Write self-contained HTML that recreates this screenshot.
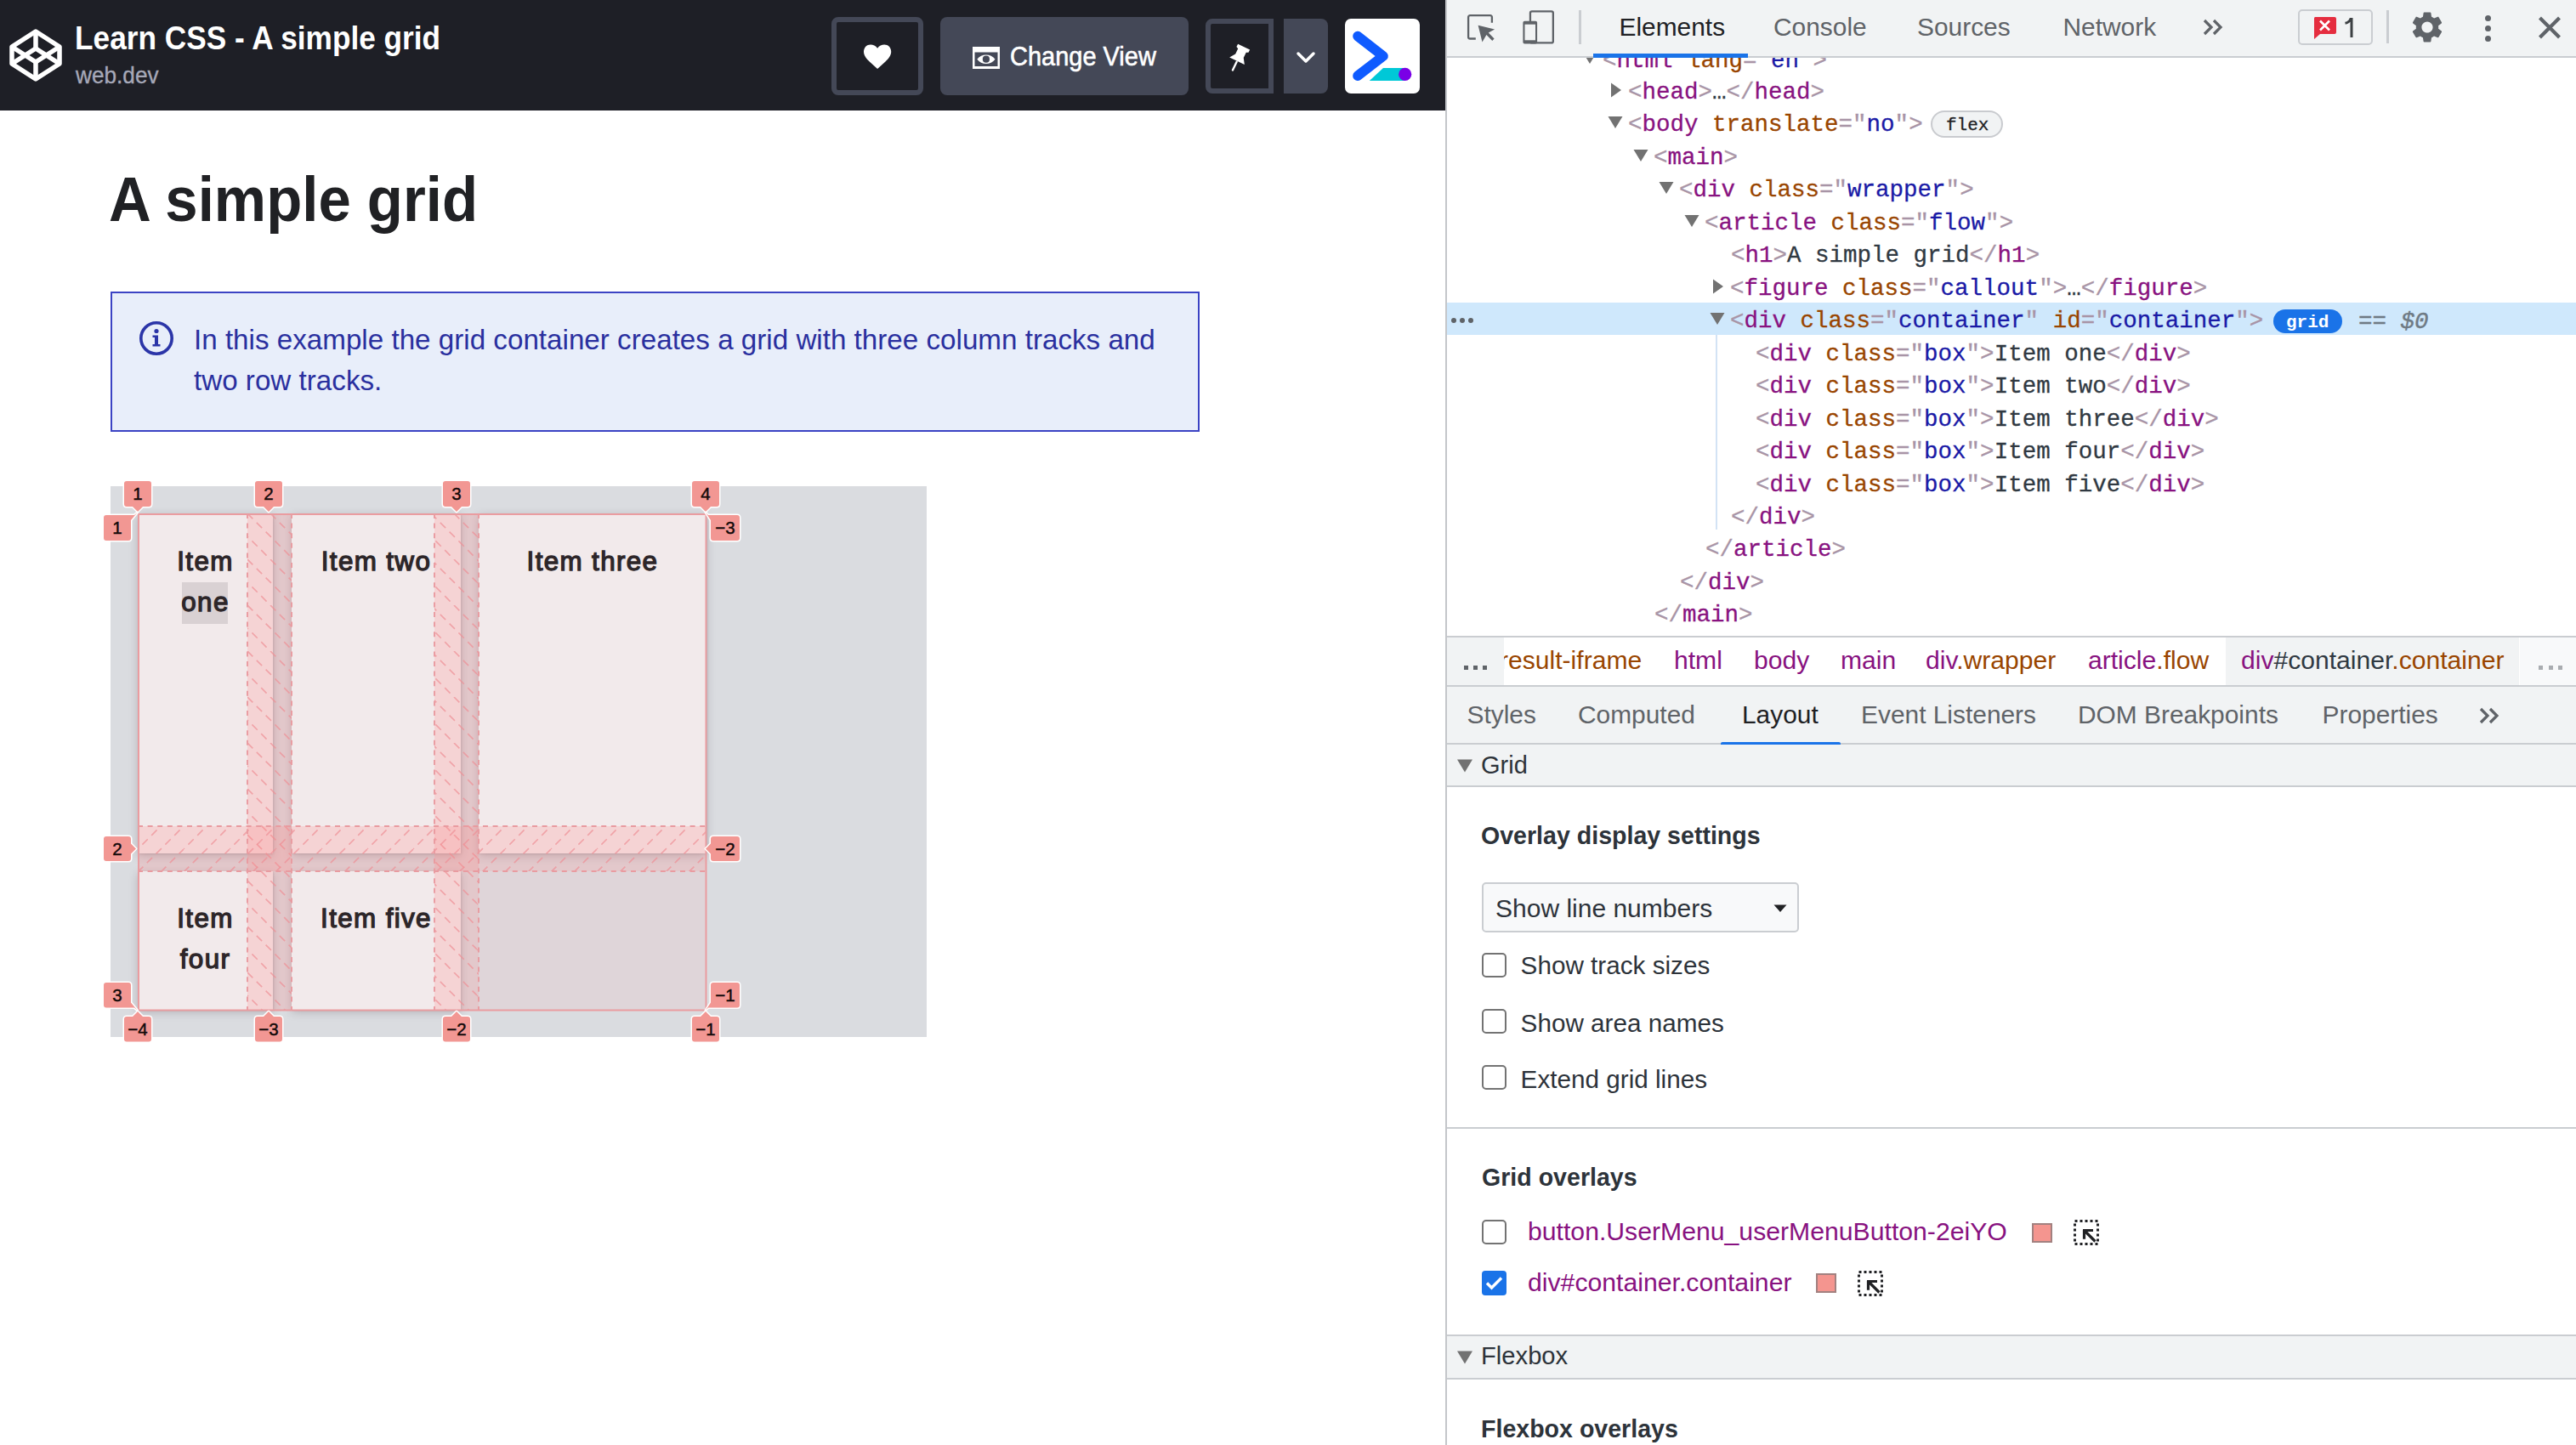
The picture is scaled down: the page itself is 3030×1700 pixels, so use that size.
<!DOCTYPE html>
<html><head><meta charset="utf-8">
<style>
*{box-sizing:border-box;margin:0;padding:0}
html,body{width:3030px;height:1700px;overflow:hidden;background:#fff;font-family:"Liberation Sans",sans-serif}
.a{position:absolute}
.t{position:absolute;white-space:nowrap}
.m{font-family:"Liberation Mono",monospace}
</style></head><body>
<!-- ============ CODEPEN HEADER ============ -->
<div class="a" style="left:0;top:0;width:1700px;height:130px;background:#1e1f26"></div>
<svg class="a" style="left:10px;top:33px" width="64" height="64" viewBox="0 0 64 64">
 <g fill="none" stroke="#fff" stroke-width="5.5" stroke-linejoin="round">
  <path d="M32 4 L60 22 L60 42 L32 60 L4 42 L4 22 Z"/>
  <path d="M4 22 L32 40 L60 22"/>
  <path d="M4 42 L32 24 L60 42"/>
  <path d="M32 4 L32 24 M32 40 L32 60"/>
 </g>
</svg>
<div class="t" style="left:87.7px;top:24.6px;font-size:39px;line-height:39px;font-weight:bold;color:#fff;transform:scaleX(0.9036);transform-origin:0 0">Learn CSS - A simple grid</div>
<div class="t" style="left:88.5px;top:76px;font-size:27px;line-height:27px;color:#a6a8b8;-webkit-text-stroke:0.35px #a6a8b8;transform:scaleX(0.97);transform-origin:0 0">web.dev</div>

<!-- heart btn -->
<div class="a" style="left:978px;top:20px;width:108px;height:92px;border:6px solid #444857;border-radius:8px;background:#1e1f26"></div>
<svg class="a" style="left:1015.9px;top:52px" width="33" height="30" viewBox="0 0 33 30"><path d="M16.1 4.8 C14 1.8 11 0.6 8 0.6 C3.5 0.6 0 4 0 8.8 C0 13.5 3 17 7 20.8 L16.1 29.1 L25.2 20.8 C29.2 17 32.2 13.5 32.2 8.8 C32.2 4 28.7 0.6 24.2 0.6 C21.2 0.6 18.2 1.8 16.1 4.8 Z" fill="#fff"/></svg>
<!-- change view -->
<div class="a" style="left:1106px;top:20px;width:292px;height:92px;border-radius:8px;background:#444857"></div>
<svg class="a" style="left:1144px;top:54.8px" width="32" height="26" viewBox="0 0 32 26">
 <path d="M0 0 H32 V26 H0 Z M2.5 6.4 V22.9 H29.5 V6.4 Z" fill="#fff" fill-rule="evenodd"/>
 <path d="M5.3 14.7 C10.3 7.6 21.5 7.6 26.5 14.7 C21.5 21.8 10.3 21.8 5.3 14.7 Z" fill="#fff"/>
 <circle cx="15.9" cy="14.7" r="4.1" fill="#444857"/>
</svg>
<div class="t" style="left:1188px;top:51.3px;font-size:31.5px;line-height:31.5px;font-weight:normal;color:#fff;-webkit-text-stroke:0.6px #fff;transform:scaleX(0.92);transform-origin:0 0">Change View</div>
<!-- pin btn -->
<div class="a" style="left:1418px;top:22px;width:80px;height:88px;border:6px solid #444857;border-radius:8px 0 0 8px;background:#1e1f26"></div>
<svg class="a" style="left:1430px;top:40px" width="60" height="55" viewBox="0 0 60 55">
 <g transform="translate(25.15 31.6) rotate(25.7)"><path d="M-7.8 -18.4 L7.8 -18.4 L7.8 -14.6 L5.3 -13.4 L5.3 -6.5 L9.8 0.3 L-9.8 0.3 L-5.3 -6.5 L-5.3 -13.4 L-7.8 -14.6 Z" fill="#fff"/><rect x="-1.2" y="0" width="2.4" height="13.2" rx="1.2" fill="#fff"/></g>
</svg>
<div class="a" style="left:1510px;top:22px;width:52px;height:88px;border-radius:0 8px 8px 0;background:#444857"></div>
<svg class="a" style="left:1524px;top:59px" width="24" height="17" viewBox="0 0 24 17"><path d="M3 4 L12 13 L21 4" fill="none" stroke="#fff" stroke-width="3.5" stroke-linecap="round" stroke-linejoin="round"/></svg>
<!-- white logo -->
<div class="a" style="left:1582px;top:22px;width:88px;height:88px;border-radius:7px;background:#fff"></div>
<svg class="a" style="left:1582px;top:22px" width="88" height="88" viewBox="0 0 88 88">
 <path d="M14 65 L28 65 L33 58 L70 58 L70 72 L23 72 Z" fill="none"/>
 <path d="M28.8 73 L45 57.9 L70.7 57.9 L70.7 73 Z" fill="#00c8d7"/>
 <circle cx="70.7" cy="65.4" r="7.6" fill="#7a00e6"/>
 <path d="M15 20.6 L45 44 L15 67.2" fill="none" stroke="#0f5bff" stroke-width="11.6" stroke-linecap="round" stroke-linejoin="round"/>
</svg>

<!-- ============ PAGE ============ -->
<div class="t" style="left:128px;top:196.5px;font-size:75px;line-height:75px;font-weight:bold;color:#202124;transform:scaleX(0.919);transform-origin:0 0">A simple grid</div>

<div class="a" style="left:130px;top:343px;width:1281px;height:165px;border:2px solid #3b43c4;background:#e8eefa"></div>
<svg class="a" style="left:162px;top:376px" width="44" height="44" viewBox="0 0 44 44">
 <circle cx="22" cy="22" r="18.2" fill="none" stroke="#2b35a8" stroke-width="3.6"/>
 <circle cx="22" cy="13.5" r="2.6" fill="#2b35a8"/>
 <path d="M17.5 18.5 L24 18.5 L24 29 L26.5 29 L26.5 31.5 L17.5 31.5 L17.5 29 L20 29 L20 21 L17.5 21 Z" fill="#2b35a8"/>
</svg>
<div class="t" style="left:228px;top:375.7px;font-size:33.2px;line-height:48.5px;color:#2a309f">In this example the grid container creates a grid with three column tracks and<br>two row tracks.</div>

<!-- GRID AREA placeholder -->
<!-- GRID -->
<div class="a" style="left:130px;top:572px;width:960px;height:648px;background:#dadce0"></div>
<div class="a" style="left:162px;top:604px;width:159px;height:400px;background:#f2eaeb;box-shadow:0 3px 10px rgba(60,40,50,.22),1px 1px 2px rgba(60,40,50,.12)"></div>
<div class="a" style="left:343px;top:604px;width:199px;height:400px;background:#f2eaeb;box-shadow:0 3px 10px rgba(60,40,50,.22),1px 1px 2px rgba(60,40,50,.12)"></div>
<div class="a" style="left:563px;top:604px;width:268px;height:400px;background:#f2eaeb;box-shadow:0 3px 10px rgba(60,40,50,.22),1px 1px 2px rgba(60,40,50,.12)"></div>
<div class="a" style="left:162px;top:1025px;width:159px;height:163px;background:#f2eaeb;box-shadow:0 3px 10px rgba(60,40,50,.22),1px 1px 2px rgba(60,40,50,.12)"></div>
<div class="a" style="left:343px;top:1025px;width:199px;height:163px;background:#f2eaeb;box-shadow:0 3px 10px rgba(60,40,50,.22),1px 1px 2px rgba(60,40,50,.12)"></div>
<div class="a" style="left:563px;top:1025px;width:268px;height:163px;background:#dfd5d9"></div>
<div class="a" style="left:214px;top:685px;width:54px;height:49px;background:#d9d1d3"></div>
<div class="t" style="left:41.5px;width:400px;text-align:center;top:636.7px;font-size:31.4px;line-height:48.3px;font-weight:normal;letter-spacing:1.35px;-webkit-text-stroke:1.3px #2d2629;color:#2d2629">Item<br>one</div>
<div class="t" style="left:242.5px;width:400px;text-align:center;top:636.7px;font-size:31.4px;line-height:48.3px;font-weight:normal;letter-spacing:1.35px;-webkit-text-stroke:1.3px #2d2629;color:#2d2629">Item two</div>
<div class="t" style="left:497px;width:400px;text-align:center;top:636.7px;font-size:31.4px;line-height:48.3px;font-weight:normal;letter-spacing:1.35px;-webkit-text-stroke:1.3px #2d2629;color:#2d2629">Item three</div>
<div class="t" style="left:41.5px;width:400px;text-align:center;top:1057.0px;font-size:31.4px;line-height:48.3px;font-weight:normal;letter-spacing:1.35px;-webkit-text-stroke:1.3px #2d2629;color:#2d2629">Item<br>four</div>
<div class="t" style="left:242.5px;width:400px;text-align:center;top:1057.0px;font-size:31.4px;line-height:48.3px;font-weight:normal;letter-spacing:1.35px;-webkit-text-stroke:1.3px #2d2629;color:#2d2629">Item five</div>
<svg class="a" style="left:0;top:0" width="1100" height="1240" viewBox="0 0 1100 1240">
<defs>
<pattern id="hv" patternUnits="userSpaceOnUse" width="54" height="54" x="291" y="604"><g stroke="#ee8f95" stroke-width="1.7" stroke-dasharray="9 6.274" opacity=".7" fill="none"><path d="M0 0 L54 54"/><path d="M27 0 L54 27"/><path d="M0 27 L27 54" stroke-dashoffset="7.637"/></g></pattern>
<pattern id="hh" patternUnits="userSpaceOnUse" width="54" height="54" x="162" y="972"><g stroke="#ee8f95" stroke-width="1.7" stroke-dasharray="9 6.274" opacity=".7" fill="none"><path d="M0 54 L54 0"/><path d="M27 54 L54 27"/><path d="M0 27 L27 0" stroke-dashoffset="7.637"/></g></pattern>
</defs>
<rect x="291" y="604" width="52" height="585" fill="rgba(255,140,140,.24)"/>
<rect x="291" y="604" width="52" height="585" fill="url(#hv)"/>
<rect x="511" y="604" width="52" height="585" fill="rgba(255,140,140,.24)"/>
<rect x="511" y="604" width="52" height="585" fill="url(#hv)"/>
<rect x="162" y="972" width="669" height="53" fill="rgba(255,140,140,.24)"/>
<rect x="162" y="972" width="669" height="53" fill="url(#hh)"/>
<line x1="291" y1="604" x2="291" y2="1189" stroke="#e99ba0" stroke-width="1.9" stroke-dasharray="6 5.6"/>
<line x1="343" y1="604" x2="343" y2="1189" stroke="#e99ba0" stroke-width="1.9" stroke-dasharray="6 5.6"/>
<line x1="511" y1="604" x2="511" y2="1189" stroke="#e99ba0" stroke-width="1.9" stroke-dasharray="6 5.6"/>
<line x1="563" y1="604" x2="563" y2="1189" stroke="#e99ba0" stroke-width="1.9" stroke-dasharray="6 5.6"/>
<line x1="162" y1="972" x2="831" y2="972" stroke="#e99ba0" stroke-width="1.9" stroke-dasharray="6 5.6"/>
<line x1="162" y1="1025" x2="831" y2="1025" stroke="#e99ba0" stroke-width="1.9" stroke-dasharray="6 5.6"/>
<rect x="163" y="605" width="667.5" height="183.8" fill="none"/>
<path d="M163 605 H830.5 V1188.5 H163 Z" fill="none" stroke="#ea9ca0" stroke-width="2"/>
<path d="M149.0 566 H175.0 Q178.0 566 178.0 569 V593 Q178.0 596 175.0 596 H168 L162 602 L156 596 H149.0 Q146.0 596 146.0 593 V569 Q146.0 566 149.0 566 Z" fill="#f29793" stroke="#fff" stroke-width="3" paint-order="stroke" stroke-linejoin="round"/>
<path d="M303.0 566 H329.0 Q332.0 566 332.0 569 V593 Q332.0 596 329.0 596 H322 L316 602 L310 596 H303.0 Q300.0 596 300.0 593 V569 Q300.0 566 303.0 566 Z" fill="#f29793" stroke="#fff" stroke-width="3" paint-order="stroke" stroke-linejoin="round"/>
<path d="M524.0 566 H550.0 Q553.0 566 553.0 569 V593 Q553.0 596 550.0 596 H543 L537 602 L531 596 H524.0 Q521.0 596 521.0 593 V569 Q521.0 566 524.0 566 Z" fill="#f29793" stroke="#fff" stroke-width="3" paint-order="stroke" stroke-linejoin="round"/>
<path d="M817.0 566 H843.0 Q846.0 566 846.0 569 V593 Q846.0 596 843.0 596 H836 L830 602 L824 596 H817.0 Q814.0 596 814.0 593 V569 Q814.0 566 817.0 566 Z" fill="#f29793" stroke="#fff" stroke-width="3" paint-order="stroke" stroke-linejoin="round"/>
<path d="M149.0 1196 H156 L162 1190 L168 1196 H175.0 Q178.0 1196 178.0 1199 V1222.5 Q178.0 1225.5 175.0 1225.5 H149.0 Q146.0 1225.5 146.0 1222.5 V1199 Q146.0 1196 149.0 1196 Z" fill="#f29793" stroke="#fff" stroke-width="3" paint-order="stroke" stroke-linejoin="round"/>
<path d="M303.0 1196 H310 L316 1190 L322 1196 H329.0 Q332.0 1196 332.0 1199 V1222.5 Q332.0 1225.5 329.0 1225.5 H303.0 Q300.0 1225.5 300.0 1222.5 V1199 Q300.0 1196 303.0 1196 Z" fill="#f29793" stroke="#fff" stroke-width="3" paint-order="stroke" stroke-linejoin="round"/>
<path d="M524.0 1196 H531 L537 1190 L543 1196 H550.0 Q553.0 1196 553.0 1199 V1222.5 Q553.0 1225.5 550.0 1225.5 H524.0 Q521.0 1225.5 521.0 1222.5 V1199 Q521.0 1196 524.0 1196 Z" fill="#f29793" stroke="#fff" stroke-width="3" paint-order="stroke" stroke-linejoin="round"/>
<path d="M817.0 1196 H824 L830 1190 L836 1196 H843.0 Q846.0 1196 846.0 1199 V1222.5 Q846.0 1225.5 843.0 1225.5 H817.0 Q814.0 1225.5 814.0 1222.5 V1199 Q814.0 1196 817.0 1196 Z" fill="#f29793" stroke="#fff" stroke-width="3" paint-order="stroke" stroke-linejoin="round"/>
<path d="M125 606 H158 L161.5 603 L154 612 V633 Q154 636 151 636 H125 Q122 636 122 633 V609 Q122 606 125 606 Z" fill="#f29793" stroke="#fff" stroke-width="3" paint-order="stroke" stroke-linejoin="round"/>
<path d="M125 984.0 H151 Q154 984.0 154 987.0 V992.5 L160 998.5 L154 1004.5 V1010.0 Q154 1013.0 151 1013.0 H125 Q122 1013.0 122 1010.0 V987.0 Q122 984.0 125 984.0 Z" fill="#f29793" stroke="#fff" stroke-width="3" paint-order="stroke" stroke-linejoin="round"/>
<path d="M125 1156 H151 Q154 1156 154 1159 V1179.5 L161.5 1188.5 L158 1185.5 H125 Q122 1185.5 122 1182.5 V1159 Q122 1156 125 1156 Z" fill="#f29793" stroke="#fff" stroke-width="3" paint-order="stroke" stroke-linejoin="round"/>
<path d="M836 612 L830 603 L833 606 H867 Q870 606 870 609 V633 Q870 636 867 636 H839 Q836 636 836 633 Z" fill="#f29793" stroke="#fff" stroke-width="3" paint-order="stroke" stroke-linejoin="round"/>
<path d="M839 984.0 H867 Q870 984.0 870 987.0 V1010.0 Q870 1013.0 867 1013.0 H839 Q836 1013.0 836 1010.0 V1004.5 L830 998.5 L836 992.5 V987.0 Q836 984.0 839 984.0 Z" fill="#f29793" stroke="#fff" stroke-width="3" paint-order="stroke" stroke-linejoin="round"/>
<path d="M839 1156 H867 Q870 1156 870 1159 V1182.5 Q870 1185.5 867 1185.5 H833 L830 1188.5 L836 1179.5 V1159 Q836 1156 839 1156 Z" fill="#f29793" stroke="#fff" stroke-width="3" paint-order="stroke" stroke-linejoin="round"/>
<text x="162" y="588.2" text-anchor="middle" font-family="Liberation Sans" font-size="20.5" fill="#140a0a" stroke="#140a0a" stroke-width="0.45">1</text>
<text x="316" y="588.2" text-anchor="middle" font-family="Liberation Sans" font-size="20.5" fill="#140a0a" stroke="#140a0a" stroke-width="0.45">2</text>
<text x="537" y="588.2" text-anchor="middle" font-family="Liberation Sans" font-size="20.5" fill="#140a0a" stroke="#140a0a" stroke-width="0.45">3</text>
<text x="830" y="588.2" text-anchor="middle" font-family="Liberation Sans" font-size="20.5" fill="#140a0a" stroke="#140a0a" stroke-width="0.45">4</text>
<text x="162" y="1218.2" text-anchor="middle" font-family="Liberation Sans" font-size="20.5" fill="#140a0a" stroke="#140a0a" stroke-width="0.45">−4</text>
<text x="316" y="1218.2" text-anchor="middle" font-family="Liberation Sans" font-size="20.5" fill="#140a0a" stroke="#140a0a" stroke-width="0.45">−3</text>
<text x="537" y="1218.2" text-anchor="middle" font-family="Liberation Sans" font-size="20.5" fill="#140a0a" stroke="#140a0a" stroke-width="0.45">−2</text>
<text x="830" y="1218.2" text-anchor="middle" font-family="Liberation Sans" font-size="20.5" fill="#140a0a" stroke="#140a0a" stroke-width="0.45">−1</text>
<text x="138" y="628.2" text-anchor="middle" font-family="Liberation Sans" font-size="20.5" fill="#140a0a" stroke="#140a0a" stroke-width="0.45">1</text>
<text x="138" y="1005.7" text-anchor="middle" font-family="Liberation Sans" font-size="20.5" fill="#140a0a" stroke="#140a0a" stroke-width="0.45">2</text>
<text x="138" y="1178.2" text-anchor="middle" font-family="Liberation Sans" font-size="20.5" fill="#140a0a" stroke="#140a0a" stroke-width="0.45">3</text>
<text x="853" y="628.2" text-anchor="middle" font-family="Liberation Sans" font-size="20.5" fill="#140a0a" stroke="#140a0a" stroke-width="0.45">−3</text>
<text x="853" y="1005.7" text-anchor="middle" font-family="Liberation Sans" font-size="20.5" fill="#140a0a" stroke="#140a0a" stroke-width="0.45">−2</text>
<text x="853" y="1178.2" text-anchor="middle" font-family="Liberation Sans" font-size="20.5" fill="#140a0a" stroke="#140a0a" stroke-width="0.45">−1</text>
</svg>

<!-- ============ DEVTOOLS ============ -->
<!-- DEVTOOLS -->
<div class="a" style="left:1700px;top:0;width:1330px;height:1700px;background:#fff"></div>
<div class="a" style="left:1700px;top:0;width:2px;height:1700px;background:#c4c6ca"></div>
<div class="a" style="left:1702px;top:356px;width:1328px;height:38px;background:#cfe8fc"></div>
<div class="a" style="left:1707px;top:374px;width:6px;height:6px;border-radius:50%;background:#5f6368"></div>
<div class="a" style="left:1717px;top:374px;width:6px;height:6px;border-radius:50%;background:#5f6368"></div>
<div class="a" style="left:1727px;top:374px;width:6px;height:6px;border-radius:50%;background:#5f6368"></div>
<div class="a" style="left:2018px;top:394px;width:2px;height:229px;background:#d3e3f5"></div>
<div class="t m" style="left:1885px;top:55.5px;font-size:27.5px;line-height:31.2px;color:#303942;-webkit-text-stroke:0.3px currentColor"><span style="color:#a894a6">&lt;</span><span style="color:#881280">html</span> <span style="color:#994500">lang</span><span style="color:#a894a6">=&quot;</span><span style="color:#1a1aa6">en</span><span style="color:#a894a6">&quot;</span><span style="color:#a894a6">&gt;</span></div>
<svg class="a" style="left:1861px;top:60.425px" width="18" height="16" viewBox="0 0 18 16"><path d="M0.5 1 L17.5 1 L9 15 Z" fill="#727272"/></svg>
<div class="t m" style="left:1915px;top:92.8px;font-size:27.5px;line-height:31.2px;color:#303942;-webkit-text-stroke:0.3px currentColor"><span style="color:#a894a6">&lt;</span><span style="color:#881280">head</span><span style="color:#a894a6">&gt;</span><span style="color:#303942">…</span><span style="color:#a894a6">&lt;/</span><span style="color:#881280">head</span><span style="color:#a894a6">&gt;</span></div>
<svg class="a" style="left:1894px;top:96.7px" width="14" height="18" viewBox="0 0 14 18"><path d="M1 0.5 L13 9 L1 17.5 Z" fill="#727272"/></svg>
<div class="t m" style="left:1915px;top:131.3px;font-size:27.5px;line-height:31.2px;color:#303942;-webkit-text-stroke:0.3px currentColor"><span style="color:#a894a6">&lt;</span><span style="color:#881280">body</span> <span style="color:#994500">translate</span><span style="color:#a894a6">=&quot;</span><span style="color:#1a1aa6">no</span><span style="color:#a894a6">&quot;</span><span style="color:#a894a6">&gt;</span></div>
<svg class="a" style="left:1891px;top:136.175px" width="18" height="16" viewBox="0 0 18 16"><path d="M0.5 1 L17.5 1 L9 15 Z" fill="#727272"/></svg>
<div class="t m" style="left:1945px;top:169.7px;font-size:27.5px;line-height:31.2px;color:#303942;-webkit-text-stroke:0.3px currentColor"><span style="color:#a894a6">&lt;</span><span style="color:#881280">main</span><span style="color:#a894a6">&gt;</span></div>
<svg class="a" style="left:1921px;top:174.65px" width="18" height="16" viewBox="0 0 18 16"><path d="M0.5 1 L17.5 1 L9 15 Z" fill="#727272"/></svg>
<div class="t m" style="left:1975px;top:208.2px;font-size:27.5px;line-height:31.2px;color:#303942;-webkit-text-stroke:0.3px currentColor"><span style="color:#a894a6">&lt;</span><span style="color:#881280">div</span> <span style="color:#994500">class</span><span style="color:#a894a6">=&quot;</span><span style="color:#1a1aa6">wrapper</span><span style="color:#a894a6">&quot;</span><span style="color:#a894a6">&gt;</span></div>
<svg class="a" style="left:1951px;top:213.125px" width="18" height="16" viewBox="0 0 18 16"><path d="M0.5 1 L17.5 1 L9 15 Z" fill="#727272"/></svg>
<div class="t m" style="left:2005px;top:246.7px;font-size:27.5px;line-height:31.2px;color:#303942;-webkit-text-stroke:0.3px currentColor"><span style="color:#a894a6">&lt;</span><span style="color:#881280">article</span> <span style="color:#994500">class</span><span style="color:#a894a6">=&quot;</span><span style="color:#1a1aa6">flow</span><span style="color:#a894a6">&quot;</span><span style="color:#a894a6">&gt;</span></div>
<svg class="a" style="left:1981px;top:251.60000000000002px" width="18" height="16" viewBox="0 0 18 16"><path d="M0.5 1 L17.5 1 L9 15 Z" fill="#727272"/></svg>
<div class="t m" style="left:2036px;top:285.2px;font-size:27.5px;line-height:31.2px;color:#303942;-webkit-text-stroke:0.3px currentColor"><span style="color:#a894a6">&lt;</span><span style="color:#881280">h1</span><span style="color:#a894a6">&gt;</span>A simple grid<span style="color:#a894a6">&lt;/</span><span style="color:#881280">h1</span><span style="color:#a894a6">&gt;</span></div>
<div class="t m" style="left:2035px;top:323.6px;font-size:27.5px;line-height:31.2px;color:#303942;-webkit-text-stroke:0.3px currentColor"><span style="color:#a894a6">&lt;</span><span style="color:#881280">figure</span> <span style="color:#994500">class</span><span style="color:#a894a6">=&quot;</span><span style="color:#1a1aa6">callout</span><span style="color:#a894a6">&quot;</span><span style="color:#a894a6">&gt;</span>…<span style="color:#a894a6">&lt;/</span><span style="color:#881280">figure</span><span style="color:#a894a6">&gt;</span></div>
<svg class="a" style="left:2014px;top:327.55px" width="14" height="18" viewBox="0 0 14 18"><path d="M1 0.5 L13 9 L1 17.5 Z" fill="#727272"/></svg>
<div class="t m" style="left:2035px;top:362.1px;font-size:27.5px;line-height:31.2px;color:#303942;-webkit-text-stroke:0.3px currentColor"><span style="color:#a894a6">&lt;</span><span style="color:#881280">div</span> <span style="color:#994500">class</span><span style="color:#a894a6">=&quot;</span><span style="color:#1a1aa6">container</span><span style="color:#a894a6">&quot;</span> <span style="color:#994500">id</span><span style="color:#a894a6">=&quot;</span><span style="color:#1a1aa6">container</span><span style="color:#a894a6">&quot;</span><span style="color:#a894a6">&gt;</span></div>
<svg class="a" style="left:2011px;top:367.025px" width="18" height="16" viewBox="0 0 18 16"><path d="M0.5 1 L17.5 1 L9 15 Z" fill="#727272"/></svg>
<div class="t m" style="left:2065px;top:400.6px;font-size:27.5px;line-height:31.2px;color:#303942;-webkit-text-stroke:0.3px currentColor"><span style="color:#a894a6">&lt;</span><span style="color:#881280">div</span> <span style="color:#994500">class</span><span style="color:#a894a6">=&quot;</span><span style="color:#1a1aa6">box</span><span style="color:#a894a6">&quot;</span><span style="color:#a894a6">&gt;</span>Item one<span style="color:#a894a6">&lt;/</span><span style="color:#881280">div</span><span style="color:#a894a6">&gt;</span></div>
<div class="t m" style="left:2065px;top:439.1px;font-size:27.5px;line-height:31.2px;color:#303942;-webkit-text-stroke:0.3px currentColor"><span style="color:#a894a6">&lt;</span><span style="color:#881280">div</span> <span style="color:#994500">class</span><span style="color:#a894a6">=&quot;</span><span style="color:#1a1aa6">box</span><span style="color:#a894a6">&quot;</span><span style="color:#a894a6">&gt;</span>Item two<span style="color:#a894a6">&lt;/</span><span style="color:#881280">div</span><span style="color:#a894a6">&gt;</span></div>
<div class="t m" style="left:2065px;top:477.5px;font-size:27.5px;line-height:31.2px;color:#303942;-webkit-text-stroke:0.3px currentColor"><span style="color:#a894a6">&lt;</span><span style="color:#881280">div</span> <span style="color:#994500">class</span><span style="color:#a894a6">=&quot;</span><span style="color:#1a1aa6">box</span><span style="color:#a894a6">&quot;</span><span style="color:#a894a6">&gt;</span>Item three<span style="color:#a894a6">&lt;/</span><span style="color:#881280">div</span><span style="color:#a894a6">&gt;</span></div>
<div class="t m" style="left:2065px;top:516.0px;font-size:27.5px;line-height:31.2px;color:#303942;-webkit-text-stroke:0.3px currentColor"><span style="color:#a894a6">&lt;</span><span style="color:#881280">div</span> <span style="color:#994500">class</span><span style="color:#a894a6">=&quot;</span><span style="color:#1a1aa6">box</span><span style="color:#a894a6">&quot;</span><span style="color:#a894a6">&gt;</span>Item four<span style="color:#a894a6">&lt;/</span><span style="color:#881280">div</span><span style="color:#a894a6">&gt;</span></div>
<div class="t m" style="left:2065px;top:554.5px;font-size:27.5px;line-height:31.2px;color:#303942;-webkit-text-stroke:0.3px currentColor"><span style="color:#a894a6">&lt;</span><span style="color:#881280">div</span> <span style="color:#994500">class</span><span style="color:#a894a6">=&quot;</span><span style="color:#1a1aa6">box</span><span style="color:#a894a6">&quot;</span><span style="color:#a894a6">&gt;</span>Item five<span style="color:#a894a6">&lt;/</span><span style="color:#881280">div</span><span style="color:#a894a6">&gt;</span></div>
<div class="t m" style="left:2036px;top:593.0px;font-size:27.5px;line-height:31.2px;color:#303942;-webkit-text-stroke:0.3px currentColor"><span style="color:#a894a6">&lt;/</span><span style="color:#881280">div</span><span style="color:#a894a6">&gt;</span></div>
<div class="t m" style="left:2006px;top:631.4px;font-size:27.5px;line-height:31.2px;color:#303942;-webkit-text-stroke:0.3px currentColor"><span style="color:#a894a6">&lt;/</span><span style="color:#881280">article</span><span style="color:#a894a6">&gt;</span></div>
<div class="t m" style="left:1976px;top:669.9px;font-size:27.5px;line-height:31.2px;color:#303942;-webkit-text-stroke:0.3px currentColor"><span style="color:#a894a6">&lt;/</span><span style="color:#881280">div</span><span style="color:#a894a6">&gt;</span></div>
<div class="t m" style="left:1946px;top:708.4px;font-size:27.5px;line-height:31.2px;color:#303942;-webkit-text-stroke:0.3px currentColor"><span style="color:#a894a6">&lt;/</span><span style="color:#881280">main</span><span style="color:#a894a6">&gt;</span></div>
<div class="a" style="left:2270.5px;top:130px;width:85px;height:31.5px;border-radius:16px;border:2px solid #c9cbcf;background:#f1f3f4"></div>
<div class="t m" style="left:2289px;top:135.1px;font-size:21px;line-height:26px;color:#202124;-webkit-text-stroke:0.3px #202124">flex</div>
<div class="a" style="left:2674px;top:364px;width:81px;height:28px;border-radius:14px;background:#1a73e8"></div>
<div class="t m" style="left:2689px;top:366.5px;font-size:21px;line-height:26px;color:#fff;font-weight:bold">grid</div>
<div class="t m" style="left:2774px;top:363.1px;font-size:27.5px;line-height:31.2px;color:#6f7a84;font-style:italic;-webkit-text-stroke:0.4px #6f7a84">== $0</div>
<div class="a" style="left:1702px;top:0;width:1328px;height:66px;background:#f1f3f4"></div>
<div class="a" style="left:1702px;top:66px;width:1328px;height:2px;background:#cacdd1"></div>
<div class="a" style="left:1874px;top:63px;width:182px;height:5px;background:#1a73e8"></div>
<div class="t" style="left:1904.5px;top:15.1px;font-size:29.9px;line-height:33.4px;color:#202124;font-weight:normal;">Elements</div>
<div class="t" style="left:2086px;top:15.1px;font-size:29.9px;line-height:33.4px;color:#5f6368;font-weight:normal;">Console</div>
<div class="t" style="left:2255px;top:15.1px;font-size:29.9px;line-height:33.4px;color:#5f6368;font-weight:normal;">Sources</div>
<div class="t" style="left:2426.5px;top:15.1px;font-size:29.9px;line-height:33.4px;color:#5f6368;font-weight:normal;">Network</div>
<svg class="a" style="left:2590px;top:21px" width="28" height="22" viewBox="0 0 28 22"><path d="M3 3 L11 11 L3 19 M14 3 L22 11 L14 19" fill="none" stroke="#5f6368" stroke-width="3.2"/></svg>
<svg class="a" style="left:1722px;top:14px" width="40" height="38" viewBox="0 0 40 38"><path d="M13.8 31.5 H7.1 a2 2 0 0 1 -2 -2 V6.2 a2 2 0 0 1 2 -2 H30.9 a2 2 0 0 1 2 2 V12.7" fill="none" stroke="#5f6368" stroke-width="2.3"/><path d="M16.6 15.8 L36.1 20.5 L28.8 24.6 L35.6 31.6 L33.3 34 L26.4 27 L21.5 35.4 Z" fill="#5f6368"/></svg>
<svg class="a" style="left:1788px;top:10px" width="44" height="44" viewBox="0 0 44 44"><rect x="11.95" y="3.45" width="26.9" height="37" rx="2" fill="none" stroke="#5f6368" stroke-width="2.3"/><rect x="3.4" y="14.8" width="16.7" height="26.8" rx="2" fill="#5f6368"/><rect x="5.5" y="18.7" width="12.5" height="18.6" fill="#f1f3f4"/></svg>
<div class="a" style="left:1856.5px;top:12px;width:3px;height:39.5px;background:#cacdd1"></div>
<div class="a" style="left:2703px;top:11px;width:88px;height:42px;border:2px solid #cacdd1;border-radius:5px;background:#f1f3f4"></div>
<svg class="a" style="left:2720px;top:18px" width="30" height="30" viewBox="0 0 30 30"><path d="M3 2 H26 a2 2 0 0 1 2 2 V20 a2 2 0 0 1 -2 2 H9 L2 28 V4 a2 2 0 0 1 1 -2 Z" fill="#e52d3f"/><path d="M9 6.5 L20 17.5 M20 6.5 L9 17.5" stroke="#fff" stroke-width="2.6"/></svg>
<svg class="a" style="left:2755px;top:20px" width="18" height="26" viewBox="0 0 18 26"><path d="M11 24 V2.5 H9.8 C8.8 5 6.5 6.8 3.5 7.3" fill="none" stroke="#3c4043" stroke-width="3"/></svg>
<div class="a" style="left:2806.5px;top:12px;width:3px;height:39px;background:#cacdd1"></div>
<svg class="a" style="left:2833px;top:9.7px" width="44" height="44" viewBox="0 0 24 24"><path fill="#5f6368" d="M19.14 12.94c.04-.3.06-.61.06-.94 0-.32-.02-.64-.07-.94l2.03-1.58c.18-.14.23-.41.12-.61l-1.92-3.32c-.12-.22-.37-.29-.59-.22l-2.39.96c-.5-.38-1.03-.7-1.62-.94l-.36-2.54c-.04-.24-.24-.41-.48-.41h-3.84c-.24 0-.43.17-.47.41l-.36 2.54c-.59.24-1.13.57-1.62.94l-2.39-.96c-.22-.08-.47 0-.59.22L2.74 8.87c-.12.21-.08.47.12.61l2.03 1.58c-.05.3-.09.63-.09.94s.02.64.07.94l-2.03 1.58c-.18.14-.23.41-.12.61l1.92 3.32c.12.22.37.29.59.22l2.39-.96c.5.38 1.03.7 1.62.94l.36 2.54c.05.24.24.41.48.41h3.84c.24 0 .44-.17.47-.41l.36-2.54c.59-.24 1.13-.56 1.62-.94l2.39.96c.22.08.47 0 .59-.22l1.92-3.32c.12-.22.07-.47-.12-.61l-2.01-1.58zM12 15.6c-1.98 0-3.6-1.62-3.6-3.6s1.62-3.6 3.6-3.6 3.6 1.62 3.6 3.6-1.62 3.6-3.6 3.6z"/></svg>
<div class="a" style="left:2923px;top:17.5px;width:7px;height:7px;border-radius:50%;background:#5f6368"></div>
<div class="a" style="left:2923px;top:29.5px;width:7px;height:7px;border-radius:50%;background:#5f6368"></div>
<div class="a" style="left:2923px;top:41.5px;width:7px;height:7px;border-radius:50%;background:#5f6368"></div>
<svg class="a" style="left:2984px;top:17.5px" width="30" height="29" viewBox="0 0 30 29"><path d="M3.5 3 L26.5 26 M26.5 3 L3.5 26" stroke="#5f6368" stroke-width="4.2"/></svg>
<div class="a" style="left:1702px;top:748px;width:1328px;height:2px;background:#cacdd1"></div>
<div class="a" style="left:1702px;top:750px;width:67px;height:56px;background:#f1f3f4"></div>
<div class="a" style="left:2618px;top:750px;width:345px;height:56px;background:#f1f3f4"></div>
<div class="a" style="left:1721.8px;top:782.5px;width:5px;height:5px;background:#5f6368"></div>
<div class="a" style="left:1732.8px;top:782.5px;width:5px;height:5px;background:#5f6368"></div>
<div class="a" style="left:1743.8px;top:782.5px;width:5px;height:5px;background:#5f6368"></div>
<div class="a" style="left:2964px;top:750px;width:66px;height:56px;background:#f8f9fa"></div>
<div class="a" style="left:2986.4px;top:783px;width:5px;height:5px;background:#a9acb0"></div>
<div class="a" style="left:2997.5px;top:783px;width:5px;height:5px;background:#a9acb0"></div>
<div class="a" style="left:3009.0px;top:783px;width:5px;height:5px;background:#a9acb0"></div>
<div class="a" style="left:1769px;top:750px;width:849px;height:56px;overflow:hidden"><div class="t" style="left:-5px;top:10.4px;font-size:30.1px;line-height:33.6px;color:#5f6368;font-weight:normal;"><span style="color:#994500">result-iframe</span></div></div>
<div class="t" style="left:1969px;top:760.4px;font-size:30.1px;line-height:33.6px;color:#881280;font-weight:normal;">html</div>
<div class="t" style="left:2063px;top:760.4px;font-size:30.1px;line-height:33.6px;color:#881280;font-weight:normal;">body</div>
<div class="t" style="left:2165px;top:760.4px;font-size:30.1px;line-height:33.6px;color:#881280;font-weight:normal;">main</div>
<div class="t" style="left:2265px;top:760.4px;font-size:30.1px;line-height:33.6px;color:#5f6368;font-weight:normal;"><span style="color:#881280">div</span><span style="color:#994500">.wrapper</span></div>
<div class="t" style="left:2456px;top:760.4px;font-size:30.1px;line-height:33.6px;color:#5f6368;font-weight:normal;"><span style="color:#881280">article</span><span style="color:#994500">.flow</span></div>
<div class="t" style="left:2636px;top:760.4px;font-size:30.1px;line-height:33.6px;color:#5f6368;font-weight:normal;"><span style="color:#881280">div</span><span style="color:#303942">#container</span><span style="color:#994500">.container</span></div>
<div class="a" style="left:1702px;top:806px;width:1328px;height:2px;background:#cacdd1"></div>
<div class="a" style="left:1702px;top:808px;width:1328px;height:66px;background:#f1f3f4"></div>
<div class="a" style="left:1702px;top:874px;width:1328px;height:2px;background:#cacdd1"></div>
<div class="a" style="left:2024px;top:873px;width:141px;height:4.5px;border-radius:2px 2px 0 0;background:#1a73e8"></div>
<div class="t" style="left:1725.5px;top:823.9px;font-size:29.9px;line-height:33.4px;color:#5f6368;font-weight:normal;">Styles</div>
<div class="t" style="left:1856px;top:823.9px;font-size:29.9px;line-height:33.4px;color:#5f6368;font-weight:normal;">Computed</div>
<div class="t" style="left:2049px;top:823.9px;font-size:29.9px;line-height:33.4px;color:#202124;font-weight:normal;">Layout</div>
<div class="t" style="left:2189px;top:823.9px;font-size:29.9px;line-height:33.4px;color:#5f6368;font-weight:normal;">Event Listeners</div>
<div class="t" style="left:2444px;top:823.9px;font-size:29.9px;line-height:33.4px;color:#5f6368;font-weight:normal;">DOM Breakpoints</div>
<div class="t" style="left:2731.5px;top:823.9px;font-size:29.9px;line-height:33.4px;color:#5f6368;font-weight:normal;">Properties</div>
<svg class="a" style="left:2915px;top:830.5px" width="28" height="22" viewBox="0 0 28 22"><path d="M3 3 L11 11 L3 19 M14 3 L22 11 L14 19" fill="none" stroke="#5f6368" stroke-width="3.2"/></svg>
<div class="a" style="left:1702px;top:876px;width:1328px;height:48px;background:#f1f3f4"></div>
<div class="a" style="left:1702px;top:924px;width:1328px;height:2px;background:#cacdd1"></div>
<svg class="a" style="left:1713px;top:892px" width="20" height="18" viewBox="0 0 20 18"><path d="M1 1.5 L19 1.5 L10 16.5 Z" fill="#727272"/></svg>
<div class="t" style="left:1742px;top:883.8px;font-size:29px;line-height:32.4px;color:#2d333a;font-weight:normal;">Grid</div>
<div class="t" style="left:1742px;top:967.0px;font-size:29.3px;line-height:32.7px;color:#2d333a;font-weight:bold;transform:scaleX(0.975);transform-origin:0 0">Overlay display settings</div>
<div class="a" style="left:1742.5px;top:1038px;width:373px;height:58.5px;border:2px solid #cacdd1;border-radius:5px;background:#f8f9fa"></div>
<div class="t" style="left:1759px;top:1052.4px;font-size:30px;line-height:33.5px;color:#2d333a;font-weight:normal;">Show line numbers</div>
<svg class="a" style="left:2086px;top:1064px" width="16" height="10" viewBox="0 0 16 10"><path d="M0.5 0.5 L15.5 0.5 L8 9 Z" fill="#202124"/></svg>
<div class="a" style="left:1742.5px;top:1120.5px;width:29px;height:29px;border:2.5px solid #737373;border-radius:5px;background:#fff"></div>
<div class="t" style="left:1788.6px;top:1118.5px;font-size:29.7px;line-height:33.2px;color:#2d333a;font-weight:normal;">Show track sizes</div>
<div class="a" style="left:1742.5px;top:1186.5px;width:29px;height:29px;border:2.5px solid #737373;border-radius:5px;background:#fff"></div>
<div class="t" style="left:1788.6px;top:1186.8px;font-size:29.7px;line-height:33.2px;color:#2d333a;font-weight:normal;">Show area names</div>
<div class="a" style="left:1742.5px;top:1252.5px;width:29px;height:29px;border:2.5px solid #737373;border-radius:5px;background:#fff"></div>
<div class="t" style="left:1788.6px;top:1252.9px;font-size:29.7px;line-height:33.2px;color:#2d333a;font-weight:normal;">Extend grid lines</div>
<div class="a" style="left:1702px;top:1326px;width:1328px;height:2px;background:#cacdd1"></div>
<div class="t" style="left:1742.5px;top:1369.3px;font-size:29.3px;line-height:32.7px;color:#2d333a;font-weight:bold;transform:scaleX(0.975);transform-origin:0 0">Grid overlays</div>
<div class="a" style="left:1742.5px;top:1435px;width:29px;height:29px;border:2.5px solid #737373;border-radius:5px;background:#fff"></div>
<div class="t" style="left:1797px;top:1431.6px;font-size:30.2px;line-height:33.7px;color:#881280;font-weight:normal;">button.UserMenu_userMenuButton-2eiYO</div>
<div class="a" style="left:2390px;top:1438.5px;width:24px;height:23px;background:#f4958f;border:2px solid #a28180"></div>
<svg class="a" style="left:2439px;top:1435px" width="30" height="30" viewBox="0 0 30 30"><rect x="1.5" y="1.5" width="27" height="27" fill="none" stroke="#202124" stroke-width="3" stroke-dasharray="3 3"/><path d="M13.5 13.5 L25.5 25.5 M12.5 12 V22.8 M11 12.5 H23" fill="none" stroke="#202124" stroke-width="3.2"/></svg>
<svg class="a" style="left:1742.5px;top:1494.5px" width="29" height="29" viewBox="0 0 29 29"><rect x="0" y="0" width="29" height="29" rx="4" fill="#1a73e8"/><path d="M6 14.5 L11.5 20 L23 8.5" fill="none" stroke="#fff" stroke-width="3.4"/></svg>
<div class="t" style="left:1797px;top:1491.5px;font-size:30.2px;line-height:33.7px;color:#881280;font-weight:normal;">div#container.container</div>
<div class="a" style="left:2136px;top:1498px;width:24px;height:23px;background:#f4958f;border:2px solid #a28180"></div>
<svg class="a" style="left:2185px;top:1494.5px" width="30" height="30" viewBox="0 0 30 30"><rect x="1.5" y="1.5" width="27" height="27" fill="none" stroke="#202124" stroke-width="3" stroke-dasharray="3 3"/><path d="M13.5 13.5 L25.5 25.5 M12.5 12 V22.8 M11 12.5 H23" fill="none" stroke="#202124" stroke-width="3.2"/></svg>
<div class="a" style="left:1702px;top:1570px;width:1328px;height:2px;background:#cacdd1"></div>
<div class="a" style="left:1702px;top:1572px;width:1328px;height:49px;background:#f1f3f4"></div>
<div class="a" style="left:1702px;top:1621px;width:1328px;height:2px;background:#cacdd1"></div>
<svg class="a" style="left:1713px;top:1588px" width="20" height="18" viewBox="0 0 20 18"><path d="M1 1.5 L19 1.5 L10 16.5 Z" fill="#727272"/></svg>
<div class="t" style="left:1742px;top:1579.1px;font-size:29.2px;line-height:32.6px;color:#2d333a;font-weight:normal;">Flexbox</div>
<div class="t" style="left:1742px;top:1665.3px;font-size:29.3px;line-height:32.7px;color:#2d333a;font-weight:bold;transform:scaleX(0.975);transform-origin:0 0">Flexbox overlays</div>
</body></html>
